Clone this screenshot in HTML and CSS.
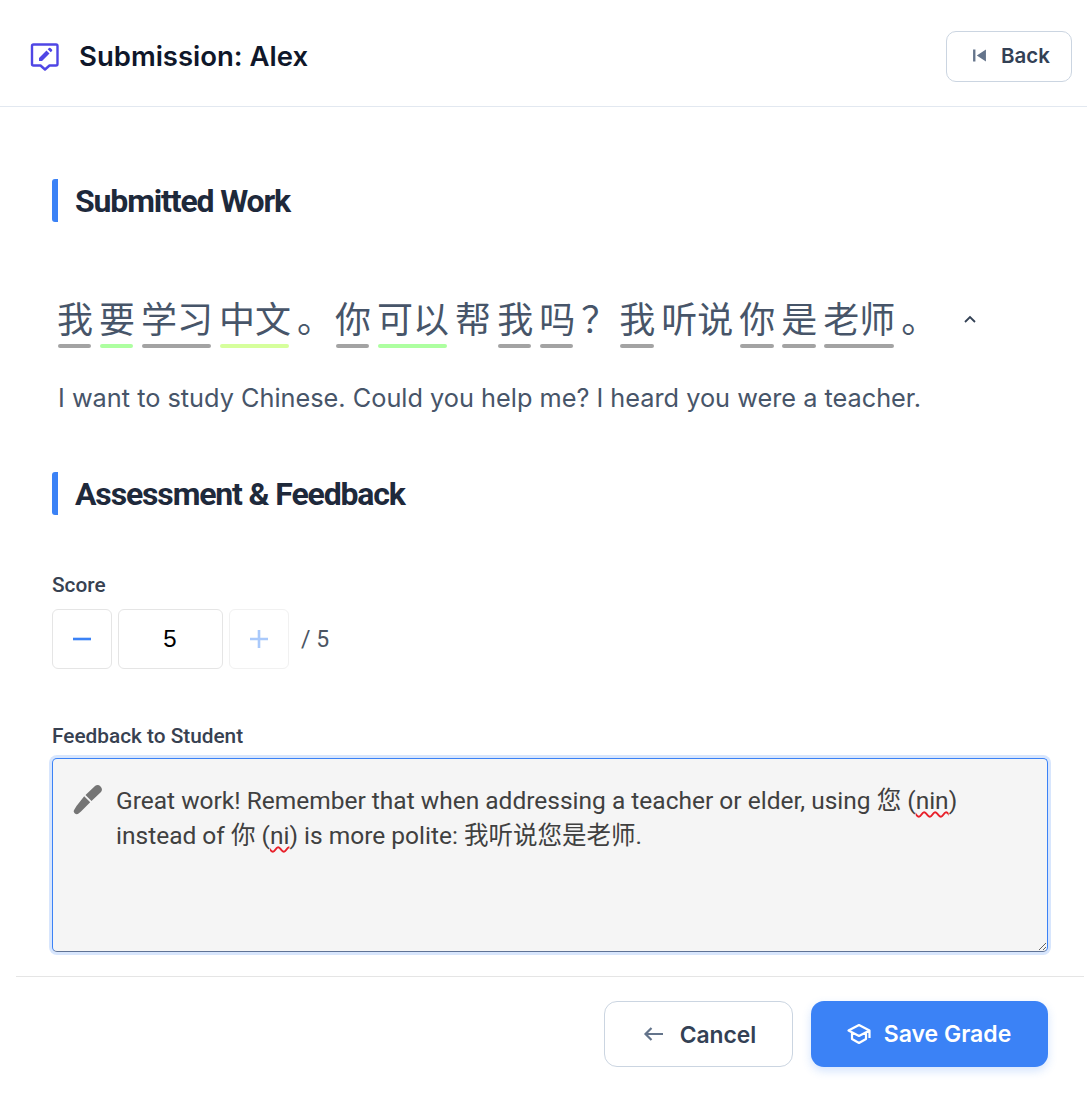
FILE: index.html
```html
<!DOCTYPE html>
<html lang="en">
<head>
<meta charset="utf-8">
<title>Submission: Alex</title>
<link rel="stylesheet" href="styles.css">
</head>
<body>
<header class="topbar">
  <div class="topbar-title">
    <svg class="icon-review" viewBox="0 0 30 30" width="30" height="30" aria-hidden="true">
      <path class="review-outline" d="M3.500 2.500H26a1.500 1.500 0 0 1 1.500 1.500V22a1.500 1.500 0 0 1-1.500 1.500H19.500L15 27.500L10.500 23.500H3.500A1.500 1.500 0 0 1 2 22V4A1.500 1.500 0 0 1 3.500 2.500Z"/>
      <path class="review-pen" d="M9 19v-3l7.500-7.500 3 3L12 19ZM17.700 7.300l1.300-1.300a1 1 0 0 1 1.400 0l1.600 1.600a1 1 0 0 1 0 1.400l-1.300 1.300Z"/>
    </svg>
    <h1>Submission: Alex</h1>
  </div>
  <button class="btn-back" type="button">
    <svg viewBox="0 0 14 14" width="15" height="15" aria-hidden="true"><path d="M1 1.500h2.200v11H1ZM13 1.500v11L4.500 7Z"/></svg>
    <span>Back</span>
  </button>
</header>

<main class="content">
  <h2 class="section-title">Submitted Work</h2>

  <div class="sentence" lang="zh">
    <span class="word mark-gray">我</span>
    <span class="word mark-green">要</span>
    <span class="word mark-gray">学习</span>
    <span class="word mark-lime">中文</span>
    <span class="punct">。</span>
    <span class="word mark-gray">你</span>
    <span class="word mark-green">可以</span>
    <span class="word">帮</span>
    <span class="word mark-gray">我</span>
    <span class="word mark-gray">吗</span>
    <span class="punct">？</span>
    <span class="word mark-gray">我</span>
    <span class="word">听说</span>
    <span class="word mark-gray">你</span>
    <span class="word mark-gray">是</span>
    <span class="word mark-gray">老师</span>
    <span class="punct">。</span>
    <svg class="chevron" viewBox="0 0 14 10" width="14" height="10" aria-hidden="true"><path d="M2 8l5-5 5 5"/></svg>
  </div>
  <p class="translation">I want to study Chinese. Could you help me? I heard you were a teacher.</p>

  <h2 class="section-title section-second">Assessment &amp; Feedback</h2>

  <label class="field-label label-score">Score</label>
  <div class="stepper">
    <button class="step" type="button"><svg viewBox="0 0 20 20" width="20" height="20" aria-hidden="true"><path d="M1 10h18"/></svg></button>
    <div class="step-value">5</div>
    <button class="step step-disabled" type="button"><svg viewBox="0 0 20 20" width="20" height="20" aria-hidden="true"><path d="M1 10h18M10 1v18"/></svg></button>
    <span class="step-max">/ 5</span>
  </div>

  <label class="field-label label-feedback">Feedback to Student</label>
  <div class="feedback">
    <svg class="icon-pen" viewBox="0 0 32 32" width="32" height="32" aria-hidden="true">
      <path d="M12.500 11L22 2A4.300 4.300 0 0 1 28 8L18.500 17ZM11.200 12.300L17.200 18.300 8 27.500 5.600 29.600A3 3 0 0 1 1.400 25.400L3.500 22Z"/>
    </svg>
    <div class="feedback-text" lang="en">Great work! Remember that when addressing a teacher or elder, using 您 (<span class="misspelt">nin</span>) instead of 你 (<span class="misspelt">ni</span>) is more polite: 我听说您是老师.</div>
  </div>
</main>

<footer class="actions">
  <button class="btn btn-cancel" type="button">
    <svg viewBox="0 0 22 16" width="22" height="16" aria-hidden="true"><path d="M20 8H2.500M8.500 2L2.500 8l6 6"/></svg>
    <span>Cancel</span>
  </button>
  <button class="btn btn-save" type="button">
    <svg viewBox="0 0 24 22" width="24" height="22" aria-hidden="true"><path d="M12 2L1.500 7.500 12 13l10.500-5.500ZM5 10v6l7 4 7-4v-6M22.500 7.500V15"/></svg>
    <span>Save Grade</span>
  </button>
</footer>
</body>
</html>
```

FILE: styles.css
```css
* { box-sizing: border-box; }

html, body {
  margin: 0;
  padding: 0;
  background: #ffffff;
}

body {
  width: 1087px;
  height: 1097px;
  overflow: hidden;
  font-family: "Inter", "Noto Sans CJK SC", sans-serif;
  color: #1e293b;
}

button {
  font-family: inherit;
  cursor: pointer;
}

/* top bar */
.topbar {
  height: 107px;
  padding: 7px 15px 0 30px;
  border-bottom: 1px solid #e2e8f0;
  display: flex;
  align-items: center;
  justify-content: space-between;
}

.topbar-title {
  display: flex;
  align-items: center;
  gap: 19px;
}

.topbar-title h1 {
  margin: 0 0 2px;
  font-size: 27.500px;
  font-weight: 600;
  line-height: 36px;
  color: #0f172a;
}

.icon-review { display: block; }

.review-outline {
  fill: none;
  stroke: #4f46e5;
  stroke-width: 2.400;
  stroke-linejoin: round;
}

.review-pen { fill: #4f46e5; }

.btn-back {
  width: 126px;
  height: 51px;
  padding: 0 0 2px 4px;
  border: 1px solid #cbd5e1;
  border-radius: 10px;
  background: #ffffff;
  display: flex;
  align-items: center;
  justify-content: center;
  gap: 14px;
  font-size: 20.500px;
  font-weight: 600;
  color: #334155;
}

.btn-back svg { fill: #64748b; }

/* content */
.content {
  padding: 72px 39px 0 52px;
}

.section-title {
  margin: 0;
  height: 43px;
  padding-left: 17px;
  border-left: 6px solid #3b82f6;
  border-radius: 3px;
  font-family: "Roboto", sans-serif;
  font-size: 32px;
  font-weight: 700;
  line-height: 45px;
  letter-spacing: -1.150px;
  color: #1e293b;
}

.section-second { margin-top: 56px; }

.sentence {
  margin-top: 70px;
  padding-left: 5px;
  height: 64px;
  display: flex;
  align-items: flex-start;
  font-family: "Noto Sans CJK SC", sans-serif;
  font-size: 36px;
  line-height: 50px;
  color: #475569;
}

.word {
  position: relative;
  display: block;
  margin-right: 6px;
  height: 56px;
}

.punct {
  display: block;
  margin-right: 2px;
}

.mark-gray::after,
.mark-green::after,
.mark-lime::after {
  content: "";
  position: absolute;
  left: 1px;
  right: 1.700px;
  bottom: 0;
  height: 4px;
  border-radius: 2px;
}

.mark-gray::after { background: #a3a3a3; }
.mark-green::after { background: #adffa0; }
.mark-lime::after { background: #d6ff9c; }

.chevron {
  margin: 22px 0 0 24px;
  fill: none;
  stroke: #334155;
  stroke-width: 1.800;
}

.translation {
  margin: 24px 0 0;
  padding-left: 6px;
  font-size: 25.300px;
  line-height: 36px;
  color: #475569;
}

.field-label {
  display: block;
  font-family: "Roboto", sans-serif;
  font-size: 20.800px;
  font-weight: 500;
  line-height: 24px;
  color: #374151;
}

.label-score { margin-top: 58px; }

.stepper {
  margin-top: 12px;
  display: flex;
  align-items: center;
  gap: 6px;
}

.step,
.step-value {
  height: 60px;
  border: 1px solid #e5e5e5;
  border-radius: 6px;
  background: #ffffff;
  display: flex;
  align-items: center;
  justify-content: center;
}

.step {
  width: 60px;
  padding: 0;
}

.step svg {
  fill: none;
  stroke: #3b82f6;
  stroke-width: 2.600;
}

.step-disabled { border-color: #f1f1f1; }
.step-disabled svg { stroke: #a9c9fb; }

.step-value {
  width: 105px;
  padding-right: 1px;
  font-family: "Liberation Sans", sans-serif;
  font-size: 24px;
  color: #000000;
}

.step-max {
  margin-left: 6px;
  font-family: "Roboto", sans-serif;
  font-size: 23px;
  color: #4b5563;
}

.label-feedback { margin-top: 55px; }

.feedback {
  margin-top: 10px;
  height: 194px;
  padding: 24px 20px 10px 20px;
  display: flex;
  gap: 11px;
  align-items: flex-start;
  background: #f5f5f5;
  border: 1.500px solid #3b82f6;
  border-bottom-color: #5f7396;
  border-radius: 5px;
  box-shadow: 0 0 0 3px #d8e6fd;
  overflow: auto;
  resize: both;
}

.icon-pen {
  flex: none;
  margin-top: 1px;
  fill: #757575;
}

.feedback-text {
  flex: 1;
  font-family: "Roboto", "Noto Sans CJK SC", sans-serif;
  font-size: 24.500px;
  line-height: 35px;
  color: #404040;
}

.misspelt {
  text-decoration: underline wavy #e8202a 1.500px;
  text-underline-offset: 2px;
}

/* footer */
.actions {
  margin: 24px 3px 0 16px;
  padding: 24px 36px 0 0;
  border-top: 1px solid #e5e5e5;
  display: flex;
  justify-content: flex-end;
  gap: 18px;
}

.btn {
  height: 66px;
  border-radius: 13px;
  display: flex;
  align-items: center;
  justify-content: center;
  font-weight: 600;
}

.btn-cancel {
  width: 189px;
  padding-left: 8px;
  gap: 15px;
  background: #ffffff;
  border: 1px solid #cbd5e1;
  font-size: 22.800px;
  color: #334155;
}

.btn-cancel svg {
  fill: none;
  stroke: #64748b;
  stroke-width: 2.200;
}

.btn-save {
  width: 237px;
  padding-left: 5px;
  gap: 13px;
  background: #3b82f6;
  border: none;
  font-size: 23px;
  color: #ffffff;
  box-shadow: 0 4px 10px rgba(59, 130, 246, 0.220);
}

.btn-save svg {
  fill: none;
  stroke: #ffffff;
  stroke-width: 2.200;
  stroke-linejoin: round;
}
```
